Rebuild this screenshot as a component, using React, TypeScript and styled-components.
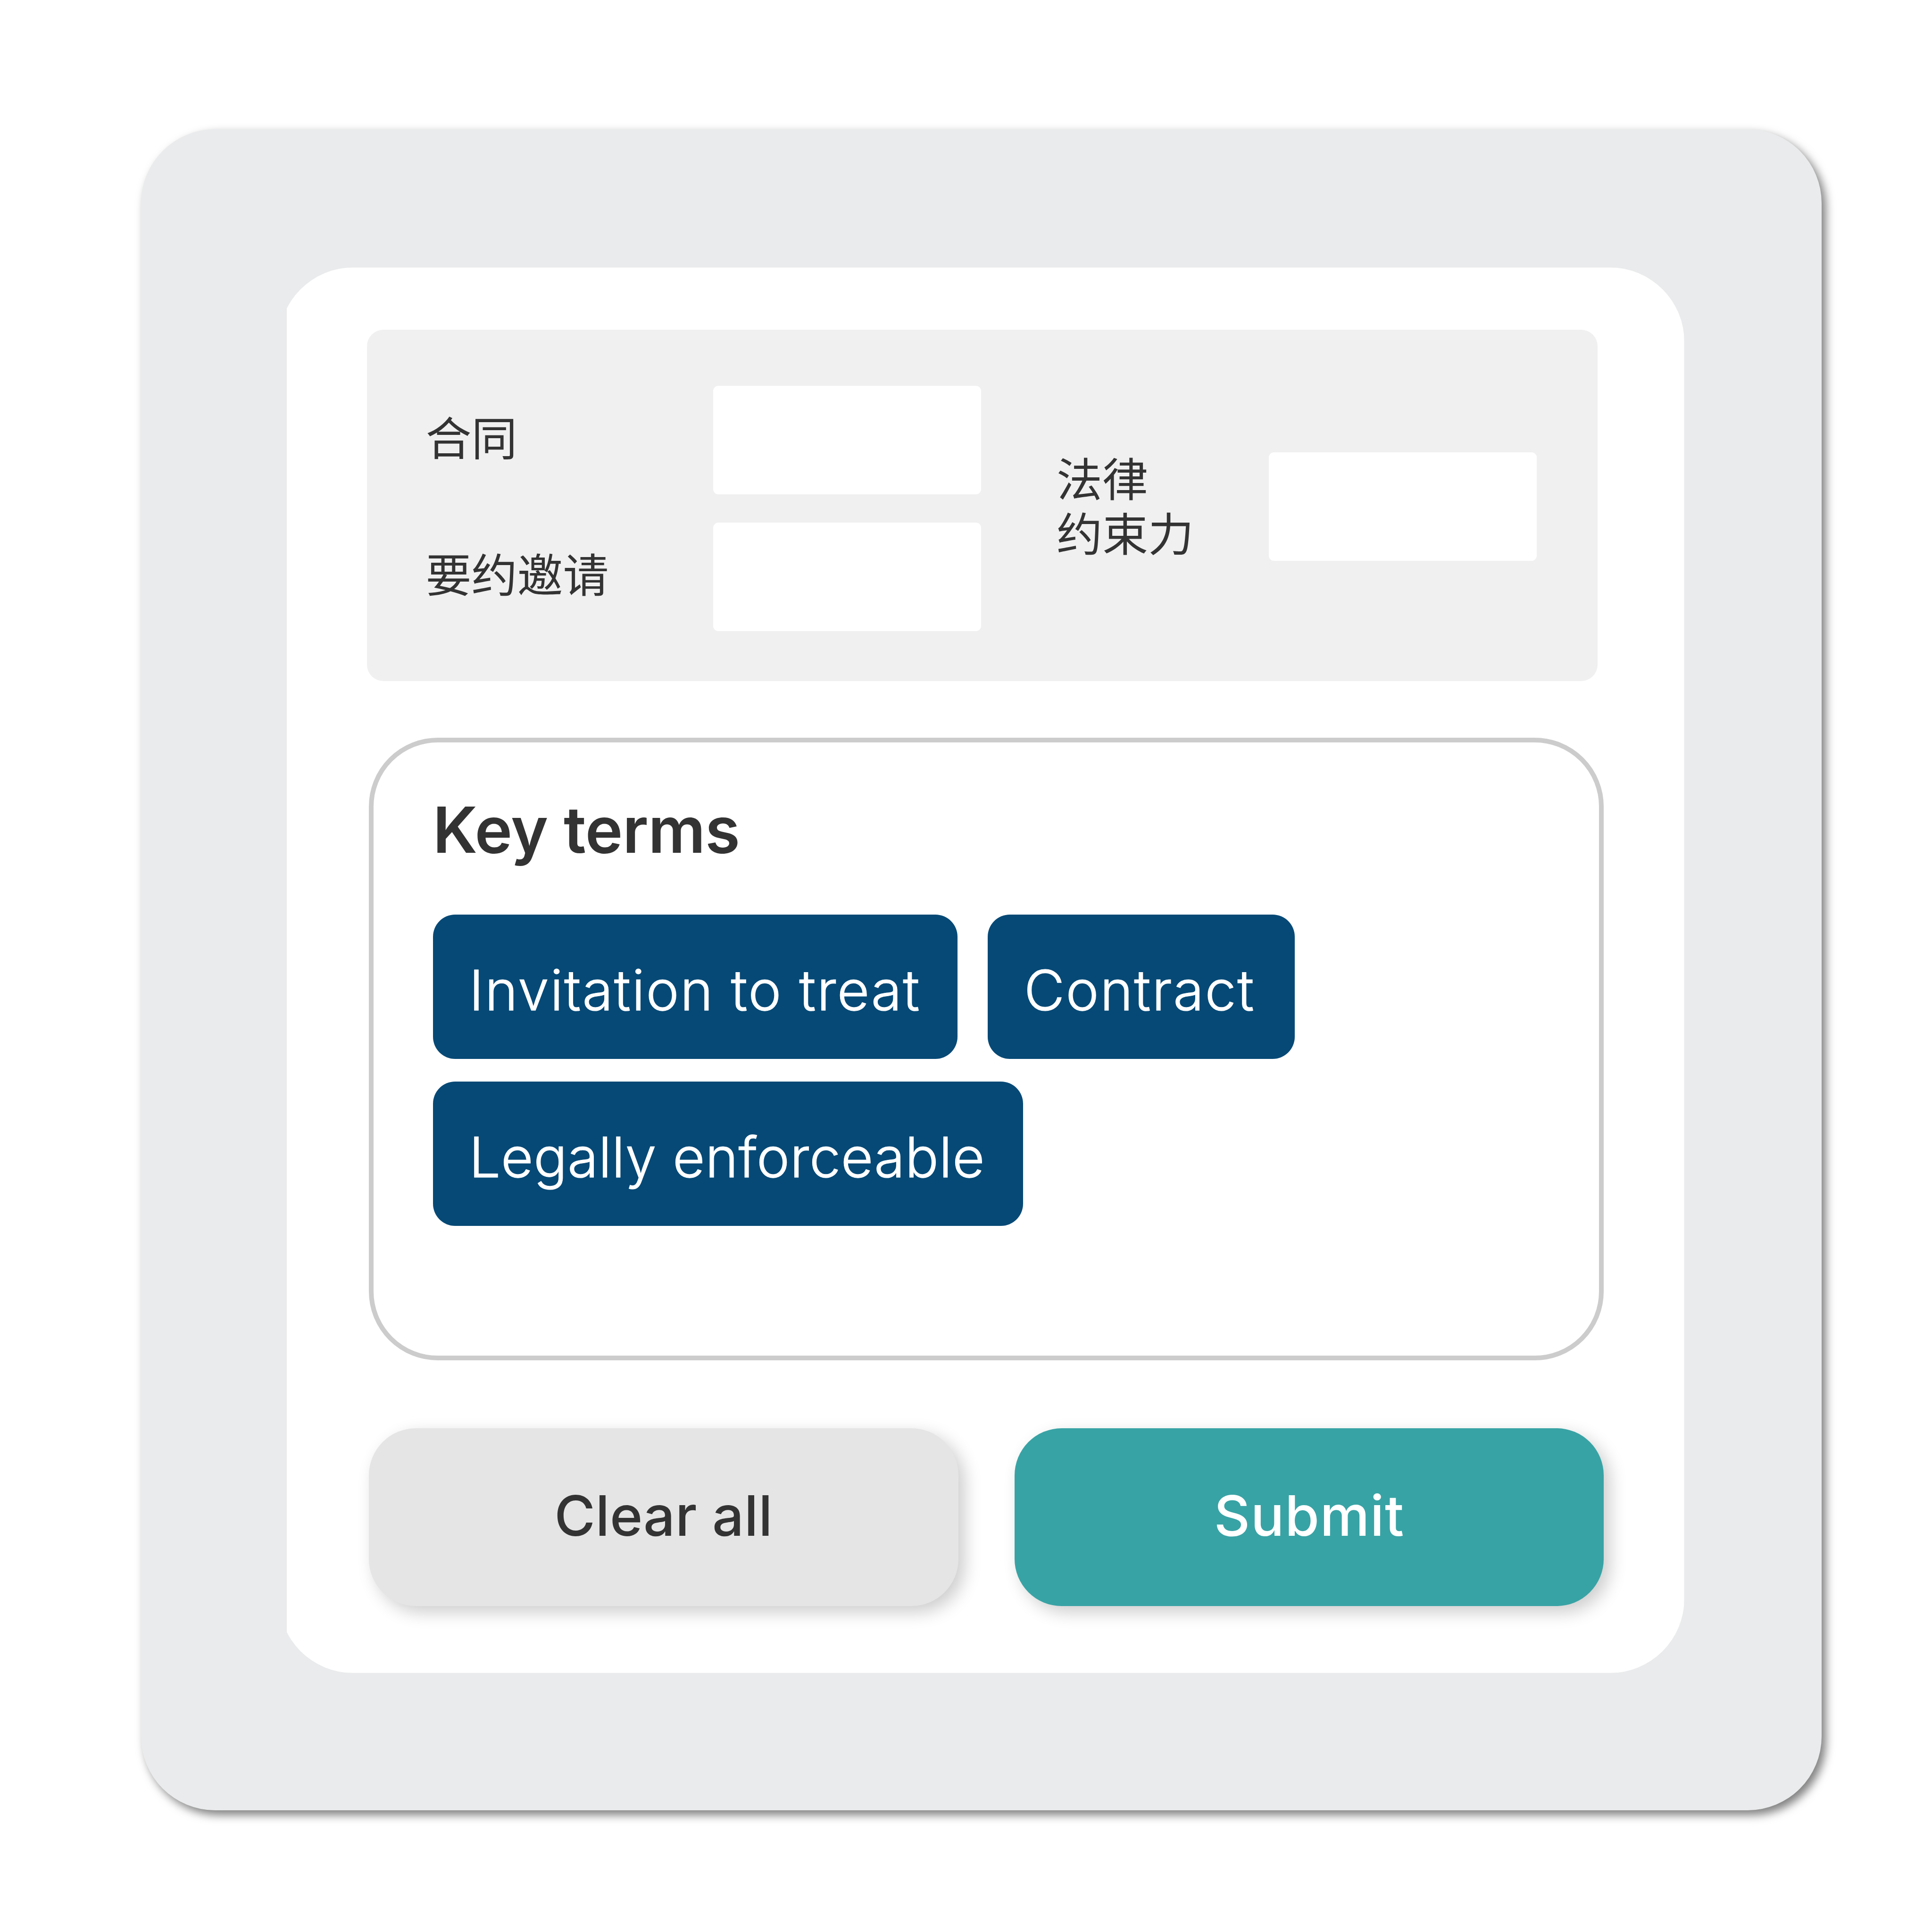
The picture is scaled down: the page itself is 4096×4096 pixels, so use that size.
import React, { useState } from 'react';
import styled, { createGlobalStyle } from 'styled-components';

const GlobalStyle = createGlobalStyle`
  * {
    box-sizing: border-box;
  }

  body {
    margin: 0;
    background: #ffffff;
  }
`;

const Page = styled.div`
  width: 4096px;
  height: 4096px;
  padding: 274px 234px 0 299px;
  font-family: 'Inter', 'Noto Sans CJK SC', sans-serif;
  font-optical-sizing: none;
  color: #333333;
`;

const Frame = styled.div`
  width: 3562.7px;
  height: 3564px;
  padding: 293.2px 0 0 292px;
  border-radius: 157px;
  background: #eaebec;
  box-shadow: 9px 10px 19px rgba(0, 0, 0, 0.5);
`;

const Panel = styled.div`
  width: 2979.5px;
  height: 2979.6px;
  padding: 132.2px 0 0 191px;
  border-radius: 158px;
  background: #ffffff;
  clip-path: inset(0 0 0 17px);
`;

const Prompts = styled.div`
  display: flex;
  width: 2609px;
  height: 744.2px;
  margin-left: -4.5px;
  padding: 118.7px 0 0 125px;
  border-radius: 35px;
  background: #f0f0f0;
`;

const PromptColumn = styled.div<{ $offset?: number }>`
  display: flex;
  flex-direction: column;
  gap: 59.9px;
  padding-top: ${(props) => props.$offset || 0}px;

  & + & {
    margin-left: 160px;
  }
`;

const PromptRow = styled.div`
  display: flex;
  align-items: center;
  height: 230px;
`;

const PromptLabel = styled.div<{ $width: number; $lift: number }>`
  width: ${(props) => props.$width}px;
  padding-bottom: ${(props) => props.$lift}px;
  font-family: 'Noto Sans CJK SC', sans-serif;
  font-size: 97px;
  line-height: 116.6px;
  white-space: pre-line;
`;

const Slot = styled.div`
  width: 567.9px;
  height: 230px;
  border-radius: 11px;
  background: #ffffff;
`;

const TermsCard = styled.div`
  width: 2617.5px;
  height: 1320px;
  margin-top: 120.7px;
  padding: 105px 125.6px 0;
  border: 10px solid #cccccc;
  border-radius: 146px;
`;

const TermsTitle = styled.h2`
  margin: 0;
  font-size: 134.8px;
  font-weight: 600;
  line-height: 160px;
  letter-spacing: -0.6px;
`;

const TermList = styled.div`
  display: flex;
  flex-wrap: wrap;
  gap: 48.3px 63.6px;
  margin-top: 100px;
`;

const Term = styled.button<{ $width: number; $spacing: number }>`
  width: ${(props) => props.$width}px;
  height: 305.6px;
  padding: 14px 0 0 77px;
  border: none;
  border-radius: 47px;
  background: #064976;
  color: #ffffff;
  font-family: inherit;
  font-size: 118.3px;
  font-weight: 300;
  -webkit-text-stroke: 1.2px #ffffff;
  letter-spacing: ${(props) => props.$spacing}px;
  text-align: left;
  white-space: nowrap;
  cursor: pointer;
`;

const Actions = styled.div`
  display: flex;
  gap: 119.3px;
  margin-top: 144px;
`;

const ActionButton = styled.button<{ $primary?: boolean }>`
  width: 1249.6px;
  height: 376.4px;
  padding: 0 0 6px;
  border: none;
  border-radius: 100px;
  background: ${(props) => (props.$primary ? '#38a3a5' : '#e5e5e5')};
  color: ${(props) => (props.$primary ? '#ffffff' : '#333333')};
  box-shadow: 13px 13px 36px rgba(0, 0, 0, 0.2);
  font-family: inherit;
  font-size: 118.3px;
  font-weight: 500;
  letter-spacing: ${(props) => (props.$primary ? 1.3 : 0.5)}px;
  cursor: pointer;
`;

const terms = [
  { label: 'Invitation to treat', width: 1112.8, spacing: 2.35 },
  { label: 'Contract', width: 651.1, spacing: 2.5 },
  { label: 'Legally enforceable', width: 1251.2, spacing: 0.65 },
];

const App: React.FC = () => {
  const [selected, setSelected] = useState<string | null>(null);

  return (
    <Page>
      <GlobalStyle />
      <Frame>
        <Panel>
          <Prompts lang="zh-CN">
            <PromptColumn>
              <PromptRow>
                <PromptLabel $width={609.6} $lift={20}>合同</PromptLabel>
                <Slot />
              </PromptRow>
              <PromptRow>
                <PromptLabel $width={609.6} $lift={20}>要约邀请</PromptLabel>
                <Slot />
              </PromptRow>
            </PromptColumn>
            <PromptColumn $offset={141.3}>
              <PromptRow>
                <PromptLabel $width={450.5} $lift={12}>{'法律\n约束力'}</PromptLabel>
                <Slot />
              </PromptRow>
            </PromptColumn>
          </Prompts>

          <TermsCard>
            <TermsTitle>Key terms</TermsTitle>
            <TermList>
              {terms.map((term) => (
                <Term
                  key={term.label}
                  $width={term.width}
                  $spacing={term.spacing}
                  aria-pressed={selected === term.label}
                  onClick={() => setSelected(term.label)}
                >
                  {term.label}
                </Term>
              ))}
            </TermList>
          </TermsCard>

          <Actions>
            <ActionButton onClick={() => setSelected(null)}>Clear all</ActionButton>
            <ActionButton $primary>Submit</ActionButton>
          </Actions>
        </Panel>
      </Frame>
    </Page>
  );
};

export default App;
